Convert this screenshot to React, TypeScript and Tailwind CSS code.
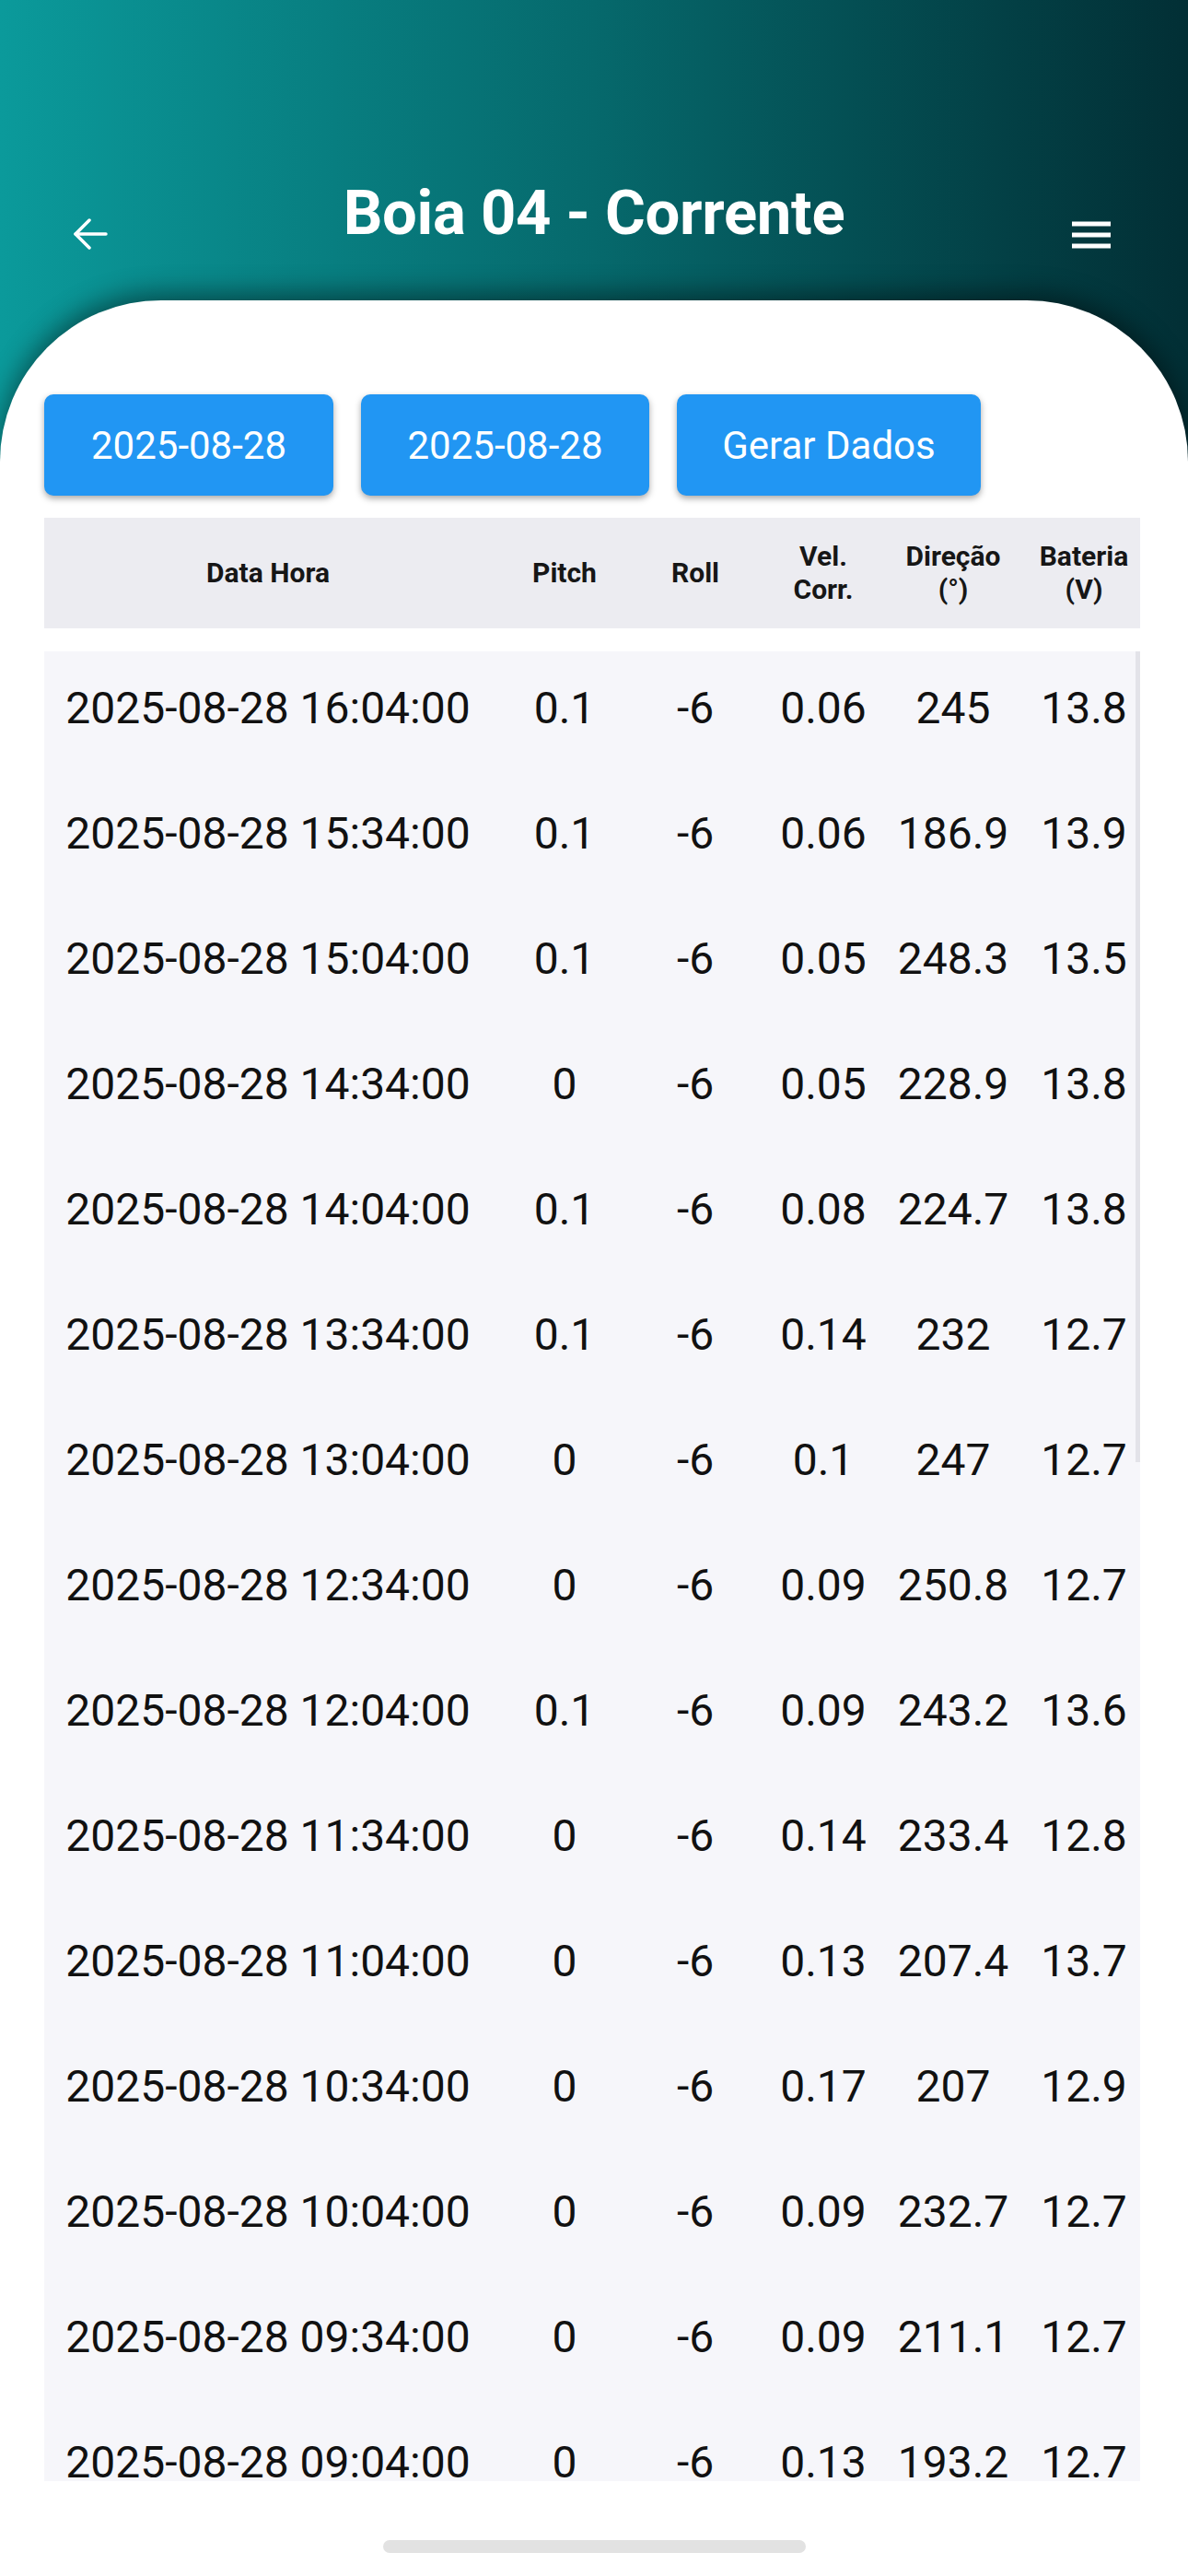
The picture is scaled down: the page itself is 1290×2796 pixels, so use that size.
import React from 'react';

const rows = [
  ['2025-08-28 16:04:00', '0.1', '-6', '0.06', '245', '13.8'],
  ['2025-08-28 15:34:00', '0.1', '-6', '0.06', '186.9', '13.9'],
  ['2025-08-28 15:04:00', '0.1', '-6', '0.05', '248.3', '13.5'],
  ['2025-08-28 14:34:00', '0', '-6', '0.05', '228.9', '13.8'],
  ['2025-08-28 14:04:00', '0.1', '-6', '0.08', '224.7', '13.8'],
  ['2025-08-28 13:34:00', '0.1', '-6', '0.14', '232', '12.7'],
  ['2025-08-28 13:04:00', '0', '-6', '0.1', '247', '12.7'],
  ['2025-08-28 12:34:00', '0', '-6', '0.09', '250.8', '12.7'],
  ['2025-08-28 12:04:00', '0.1', '-6', '0.09', '243.2', '13.6'],
  ['2025-08-28 11:34:00', '0', '-6', '0.14', '233.4', '12.8'],
  ['2025-08-28 11:04:00', '0', '-6', '0.13', '207.4', '13.7'],
  ['2025-08-28 10:34:00', '0', '-6', '0.17', '207', '12.9'],
  ['2025-08-28 10:04:00', '0', '-6', '0.09', '232.7', '12.7'],
  ['2025-08-28 09:34:00', '0', '-6', '0.09', '211.1', '12.7'],
  ['2025-08-28 09:04:00', '0', '-6', '0.13', '193.2', '12.7'],
];

// last column sits a little right of centre in the original
const cols = 'grid grid-cols-[486px_158px_126px_152px_130px_138px] [&>*:last-child]:pl-[16px]';

const BackArrow = () => (
  <svg width="40" height="40" viewBox="0 0 40 40" fill="none" stroke="white" strokeWidth="3.5" strokeLinecap="round" strokeLinejoin="round">
    <path d="M37 20H4" />
    <path d="M19 5L4 20l15 15" />
  </svg>
);

const MenuIcon = () => (
  <svg width="42" height="30" viewBox="0 0 42 30" fill="none" stroke="white" strokeWidth="5">
    <path d="M0 3h42M0 15h42M0 27h42" />
  </svg>
);

const DateButton = ({ label, width }: { label: string; width: string }) => (
  <button className={`${width} h-[110px] rounded-[10px] bg-[#2196f3] text-white text-[42px] shadow-[0_3px_7px_rgba(0,0,0,0.35)]`}>
    {label}
  </button>
);

export default function App() {
  return (
    <div className="w-[1290px] h-[2796px] overflow-hidden bg-gradient-to-r from-[#0b9a9b] via-[#06696c] to-[#022f35] font-['Roboto',sans-serif]">
      {/* top bar */}
      <div className="h-[326px] flex items-start justify-between px-[78px]">
        <div className="w-[60px] mt-[234px]">
          <BackArrow />
        </div>
        <h1 className="mt-[186px] text-[67px] leading-[90px] font-bold text-white tracking-[-0.3px]">
          Boia 04 - Corrente
        </h1>
        <div className="w-[60px] mt-[240px] flex justify-end pr-[6px]">
          <MenuIcon />
        </div>
      </div>

      {/* card */}
      <div className="h-[2470px] bg-white rounded-t-[175px] shadow-[0_-8px_28px_rgba(0,0,0,0.45)] pt-[102px] px-[48px] flex flex-col">
        <div className="flex gap-[30px]">
          <DateButton label="2025-08-28" width="w-[314px]" />
          <DateButton label="2025-08-28" width="w-[313px]" />
          <DateButton label="Gerar Dados" width="w-[330px]" />
        </div>

        <div className={`${cols} mt-[24px] h-[120px] w-[1190px] bg-[#ececf1] items-center text-center text-[30px] leading-[36px] font-bold text-[#161616]`}>
          <div>Data Hora</div>
          <div>Pitch</div>
          <div>Roll</div>
          <div>Vel.<br />Corr.</div>
          <div>Direção<br />(°)</div>
          <div>Bateria<br />(V)</div>
        </div>

        <div className="relative mt-[25px] h-[1986px] w-[1190px] overflow-hidden bg-[#f6f6fa]">
          {rows.map((r) => (
            <div key={r[0]} className={`${cols} h-[136px] pb-[12px] items-center text-center text-[48px] text-[#111]`}>
              {r.map((v, i) => (
                <div key={i}>{v}</div>
              ))}
            </div>
          ))}
          <div className="absolute right-0 top-0 w-[5px] h-[880px] bg-[#e3e3e9]" />
        </div>

        <div className="mt-[64px] self-center w-[459px] h-[14px] rounded-full bg-[#e2e2e2]" />
      </div>
    </div>
  );
}
